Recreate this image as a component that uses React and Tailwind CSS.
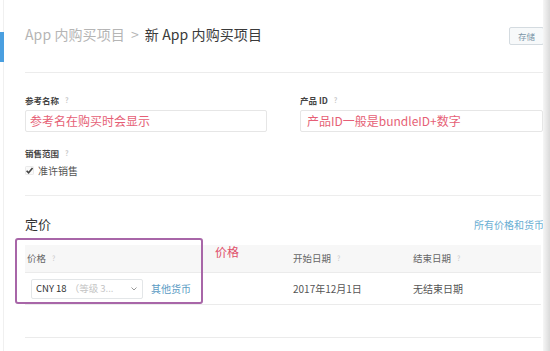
import React from "react";

const font = { fontFamily: '"Noto Sans CJK SC", "Noto Sans", sans-serif' };

function Help() {
  return <span className="ml-[6px] text-[7px] text-[#c8c8c8]">?</span>;
}

export default function App() {
  return (
    <div style={font} className="relative w-[550px] h-[351px] overflow-hidden bg-white flex text-[#333]">
      {/* side bar edge */}
      <div className="w-[4px] shrink-0 border-r border-[#f0f0f0]">
        <div className="mt-[32px] h-[30px] w-[4px] bg-[#4a9fe0]" />
      </div>

      <div className="flex-1 pl-[21px] flex flex-col">
        {/* header */}
        <div className="h-[73px] flex justify-between items-start border-b border-[#ececec] shrink-0">
          <div className="mt-[24px] text-[14px] leading-[20px] tracking-[0.1px]">
            <span className="text-[#b5b5b5]">App 内购买项目</span>
            <span className="text-[#b5b5b5] mx-[6px]">&gt;</span>
            <span className="text-[#3a3a3a]">新 App 内购买项目</span>
          </div>
          <button className="mt-[27px] h-[18px] w-[35px] mr-[-1px] border border-[#d4dbe0] rounded-[2px] bg-[#f7f9fa] text-[8.5px] text-[#7d96a8] leading-none">
            存储
          </button>
        </div>

        {/* fields */}
        <div className="flex gap-[33px] mt-[21px]">
          <div className="w-[242px]">
            <div className="h-[12px] text-[8.5px] leading-[12px] font-bold text-[#444] flex items-center">
              参考名称<Help />
            </div>
            <div className="mt-[4px] h-[22px] border border-[#e6e6e6] rounded-[2px] flex items-center pl-[4px] text-[12px] text-[#e65f76]">
              参考名在购买时会显示
            </div>
          </div>
          <div className="w-[243px]">
            <div className="h-[12px] text-[8.5px] leading-[12px] font-bold text-[#444] flex items-center">
              产品 ID<Help />
            </div>
            <div className="mt-[4px] h-[22px] border border-[#e6e6e6] rounded-[2px] flex items-center pl-[6px] text-[12px] text-[#e65f76]">
              产品ID一般是bundleID+数字
            </div>
          </div>
        </div>

        <div className="mt-[15px] h-[12px] text-[8.5px] leading-[12px] font-bold text-[#444] flex items-center">
          销售范围<Help />
        </div>
        <div className="mt-[5px] h-[12px] flex items-center gap-[4px] text-[10px] text-[#555]">
          <svg width="9" height="9" viewBox="0 0 10 10">
            <rect x="0.5" y="0.5" width="9" height="9" rx="1" fill="#fafafa" stroke="#e2e2e2" strokeWidth="0.8" />
            <path d="M1.8 5.2 L4 7.6 L8.4 2.2" fill="none" stroke="#444" strokeWidth="1.8" />
          </svg>
          准许销售
        </div>

        <div className="mt-[19px] mr-[2px] border-t border-[#ededed]" />

        {/* pricing */}
        <div className="mt-[19px] h-[18px] flex items-center justify-between">
          <span className="text-[13px] text-[#333]">定价</span>
          <span className="text-[10px] text-[#6aaed3] mr-[-1px]">所有价格和货币</span>
        </div>

        <div className="mt-[12px] mr-[2px]">
          <div className="h-[28px] bg-[#f7f7f7] border-b border-[#ebebeb] flex items-center text-[9.5px] text-[#666]">
            <div className="w-[268px] pl-[2px] flex items-center">价格<Help /></div>
            <div className="w-[120px] flex items-center">开始日期<Help /></div>
            <div className="flex items-center">结束日期<Help /></div>
          </div>
          <div className="h-[32px] border-b border-[#ebebeb] flex items-center text-[9.5px] text-[#555]">
            <div className="w-[268px] pl-[6px] flex items-center">
              <div className="w-[112px] h-[20px] border border-[#e3e6e8] rounded-[2px] flex items-center pl-[4px] pr-[5px]">
                <span className="text-[#333]">CNY 18</span>
                <span className="ml-[3px] text-[#c4c4c4] flex-1 truncate">（等级 3...</span>
                <svg width="6" height="4" viewBox="0 0 6 4">
                  <path d="M0.5 0.5 L3 3 L5.5 0.5" fill="none" stroke="#999" strokeWidth="1" />
                </svg>
              </div>
              <span className="ml-[8px] text-[10px] text-[#5b9cc4]">其他货币</span>
            </div>
            <div className="w-[120px] text-[10px]">2017年12月1日</div>
            <div className="text-[10px]">无结束日期</div>
          </div>
          <div className="h-[33px] border-b border-[#ebebeb]" />
        </div>
      </div>

      {/* right shade */}
      <div className="w-[9px] shrink-0 bg-gradient-to-r from-[#f6f6f6] to-[#d2d2d2]" />

      {/* annotations */}
      <div className="absolute left-[15px] top-[238px] w-[188px] h-[66px] border-2 border-[#a866a8] rounded-[3px]" />
      <div className="absolute left-[215px] top-[244px] text-[12px] leading-[16px] text-[#e0506b]">价格</div>
    </div>
  );
}
